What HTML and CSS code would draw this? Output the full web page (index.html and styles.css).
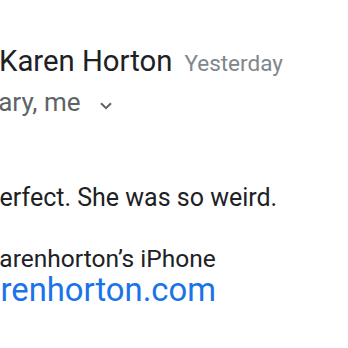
FILE: index.html
```html
<!DOCTYPE html>
<html>
<head>
<meta charset="utf-8">
<link rel="stylesheet" href="styles.css">
</head>
<body>
<div class="mail">
  <div class="head">
    <span class="name">Karen Horton</span>
    <span class="time">Yesterday</span>
  </div>
  <div class="to">
    <span>to Mary, me</span>
    <svg class="chev" width="12" height="8" viewBox="0 0 12 8"><path d="M1 1.2 L6 6.2 L11 1.2" fill="none" stroke="#5f6368" stroke-width="2"/></svg>
  </div>
  <div class="body">Perfect. She was so weird.</div>
  <div class="sig">Karenhorton’s iPhone</div>
  <a class="link" href="#">karenhorton.com</a>
</div>
</body>
</html>
```

FILE: styles.css
```css
html, body {
  margin: 0;
  padding: 0;
  background: #fff;
  overflow: hidden;
  width: 348px;
  height: 348px;
}
.mail {
  display: flex;
  flex-direction: column;
  align-items: flex-start;
  font-family: Roboto, "Noto Sans", sans-serif;
  padding-top: 43px;
}
.head {
  display: flex;
  align-items: baseline;
  gap: 12px;
  white-space: nowrap;
  line-height: 36px;
}
.name {
  font-size: 29.3px;
  color: #202124;
  margin-left: -1px;
}
.time {
  font-size: 22.5px;
  color: #80868b;
}
.to {
  display: flex;
  align-items: center;
  gap: 19px;
  font-size: 26px;
  line-height: 30px;
  color: #5f6368;
  margin-left: -54px;
  margin-top: 6px;
  white-space: nowrap;
}
.chev { margin-top: 7px; }
.body {
  font-size: 25px;
  line-height: 30px;
  color: #202124;
  margin-left: -16px;
  margin-top: 66px;
  white-space: nowrap;
}
.sig {
  font-size: 24.5px;
  line-height: 30px;
  color: #202124;
  margin-left: -16px;
  margin-top: 31px;
  white-space: nowrap;
}
.link {
  font-size: 32.8px;
  line-height: 37px;
  color: #1a73e8;
  text-decoration: none;
  margin-left: -34px;
  margin-top: -2px;
  white-space: nowrap;
}
```
